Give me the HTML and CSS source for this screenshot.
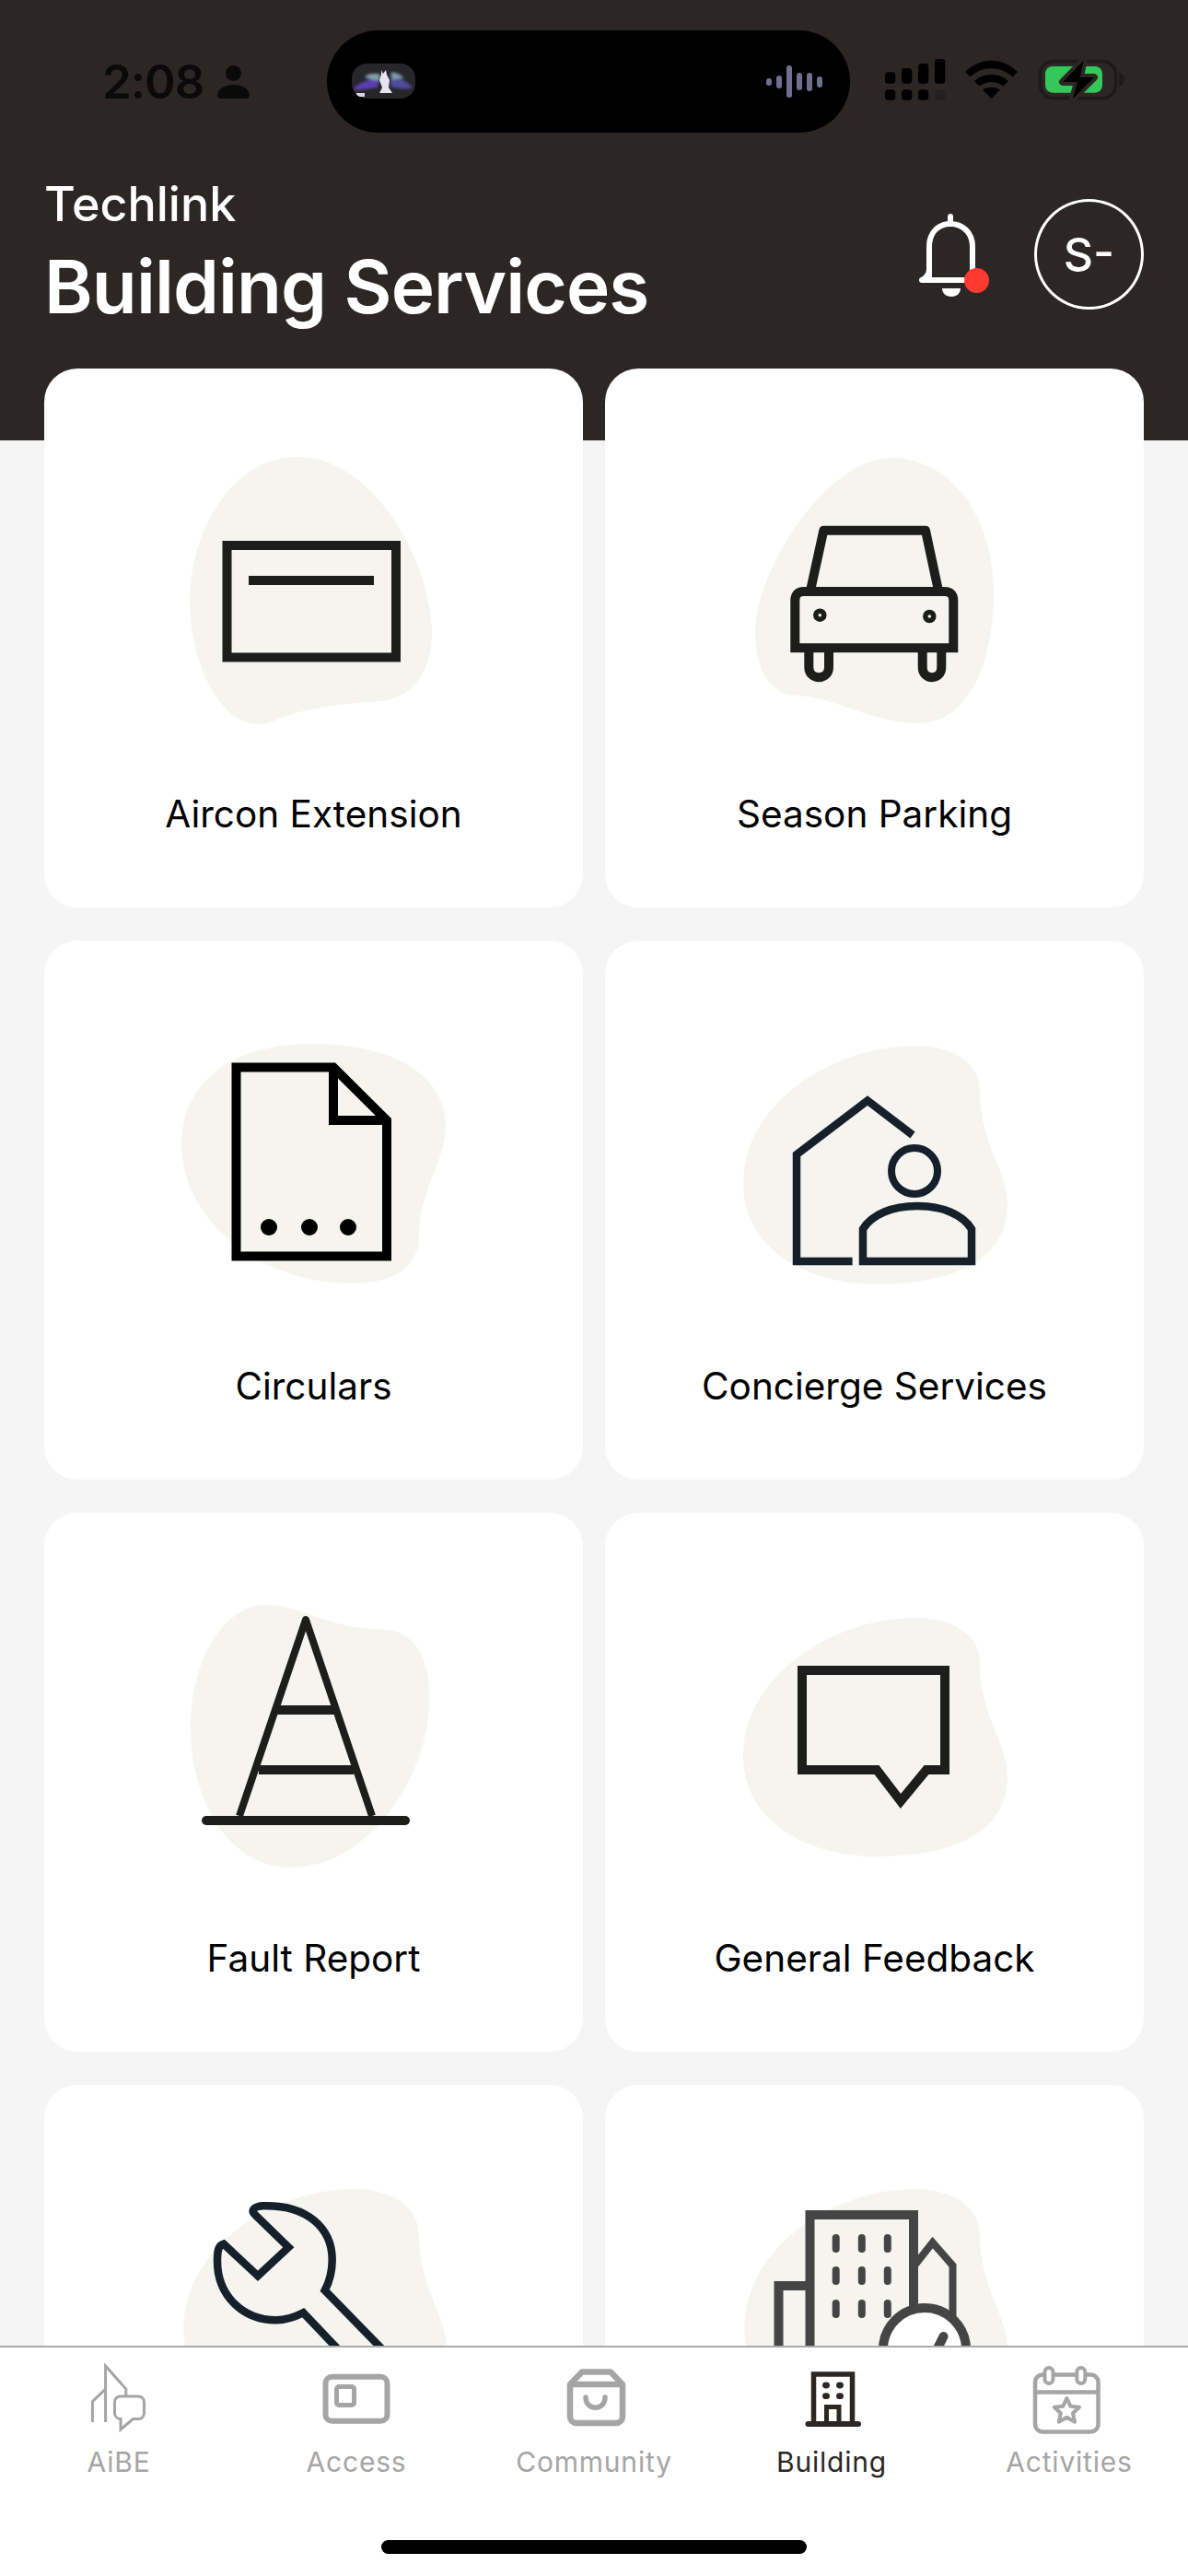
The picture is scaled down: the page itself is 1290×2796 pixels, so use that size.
FILE: index.html
```html
<!DOCTYPE html>
<html lang="en">
<head>
<meta charset="utf-8">
<title>Building Services</title>
<link rel="stylesheet" href="styles.css">
</head>
<body>
<div class="app">
  <header class="header">
    <div class="status">
      <div class="status-left">
        <span class="time">2:08</span>
        <svg class="person" viewBox="0 0 35 36"><circle cx="17.500" cy="8.500" r="8.500"/><path d="M0 32C1 25 8 21 17.500 21S34 25 35 32C35 34.800 33.500 36 31 36H4C1.500 36 0 34.800 0 32Z"/></svg>
      </div>
      <div class="island">
        <div class="thumb">
          <svg class="thumb-art" viewBox="0 0 69 38">
            <g class="thumb-blur">
              <path d="M1 28C8 20 18 17 30 16L28 26C18 27 8 30 1 28Z" fill="#5a3fb0"/>
              <path d="M14 14C20 10 26 10 31 12L30 19C24 18 18 18 14 14Z" fill="#7fa0a8"/>
              <path d="M66 26C60 19 52 15 42 14L42 25C50 27 58 29 66 26Z" fill="#4f4a9a"/>
              <path d="M42 10C48 9 54 12 56 16L44 18Z" fill="#7f9aa8"/>
            </g>
            <path d="M32 7L34 11L37 7L38 12L41 18L40 26L44 32H30L33 26L30 18L32 12Z" fill="#e8e4f2"/>
            <rect x="5" y="32" width="9" height="4" fill="#d8d8d8"/>
          </svg>
        </div>
        <div class="wave"><i class="b1"></i><i class="b2"></i><i class="b3"></i><i class="b4"></i><i class="b5"></i><i class="b6"></i></div>
      </div>
      <svg class="status-right" viewBox="961 33 262 111">
        <g fill="#000">
          <rect x="961" y="78.300" width="11.300" height="12.400" rx="3.500"/>
          <rect x="979" y="74" width="11.300" height="16.700" rx="3.500"/>
          <rect x="997" y="69" width="11.300" height="21.700" rx="3.500"/>
          <rect x="1015" y="64" width="11.300" height="26.700" rx="3.500"/>
          <rect x="961" y="97.300" width="11.300" height="11.400" rx="3.500"/>
          <rect x="979" y="97.300" width="11.300" height="11.400" rx="3.500"/>
          <rect x="997" y="97.300" width="11.300" height="11.400" rx="3.500"/>
          <rect x="1015" y="97.300" width="11.300" height="11.400" rx="3.500" fill="#24201e"/>
          <path d="M1048 78C1056 70 1066 65.700 1076.500 65.700S1097 70 1105 78L1099.500 83.500C1093 77.500 1085 74.300 1076.500 74.300S1060 77.500 1053.500 83.500Z"/>
          <path d="M1058 88C1063 83.500 1069.500 81 1076.500 81S1090 83.500 1095 88L1089.500 93.500C1085.500 90.500 1081 89 1076.500 89S1067.500 90.500 1063.500 93.500Z"/>
          <path d="M1067 97.500C1069.500 95.800 1073 94.800 1076.500 94.800S1083.500 95.800 1086 97.500L1076.500 107Z"/>
        </g>
        <rect x="1129.500" y="66.500" width="82" height="40" rx="14" fill="none" stroke="#1d1a18" stroke-width="3.500"/>
        <path d="M1215 79C1219 80 1221 83 1221 86.500S1219 93 1215 94Z" fill="#1d1a18"/>
        <rect x="1135" y="72" width="62" height="28.700" rx="8" fill="#34c759"/>
        <path d="M1176.700 65.700L1154 89H1170L1165 107L1188 84H1172.700Z" fill="#000" stroke="#2c2725" stroke-width="8" stroke-linejoin="round" paint-order="stroke"/>
      </svg>
    </div>
    <div class="titlebar">
      <div class="titles">
        <div class="subtitle">Techlink</div>
        <h1 class="title">Building Services</h1>
      </div>
      <div class="actions">
        <div class="bell">
          <svg viewBox="0 0 76 90" width="76" height="90">
            <path d="M34 3V10M11 68V36C11 20 21 11 34 11S58 20 58 36V60" fill="none" stroke="#fff" stroke-width="6" stroke-linecap="round"/>
            <path d="M3 72H56" fill="none" stroke="#fff" stroke-width="6" stroke-linecap="round"/>
            <path d="M3 72C7 70 11 66 11 60" fill="none" stroke="#fff" stroke-width="6"/>
            <path d="M25 81H45C45 86 41 90 35 90S25 86 25 81Z" fill="#fff"/>
          </svg>
          <span class="badge"></span>
        </div>
        <div class="avatar">S-</div>
      </div>
    </div>
  </header>

  <main class="content">
    <div class="grid">
      <a class="card">
        <svg class="art" viewBox="0 0 585 420">
          <path class="blob" d="M276 96C195 96 158 190 158 250C158 320 190 386 233 386C255 386 255 368 365 361C395 358 421 335 421 286C421 215 360 96 276 96Z"/>
          <g class="ink ink-dark">
            <rect x="198.500" y="192" width="183.500" height="121.500"/>
            <path d="M222 230H358"/>
          </g>
        </svg>
        <div class="label">Aircon Extension</div>
      </a>
      <a class="card">
        <svg class="art" viewBox="0 0 585 420">
          <path class="blob" d="M311 97C240 97 163 220 163 286C163 330 182 355 208 355C245 355 290 385 339 385C395 385 422 320 422 243C422 160 375 97 311 97Z"/>
          <g class="ink ink-dark">
            <path d="M223.700 238L237.300 175.700H348L361.300 238" stroke-linejoin="round"/>
            <path d="M206.300 303.300V252Q206.300 242 216 242H368.500Q378.300 242 378.300 252V303.300Z"/>
            <circle cx="233.300" cy="267.700" r="4.500" stroke-width="5.500"/>
            <circle cx="352.300" cy="269" r="4.500" stroke-width="5.500"/>
            <path d="M221.300 308V324C221.300 339 243 339 243 324V308M344.700 308V324C344.700 339 365.300 339 365.300 324V308"/>
          </g>
        </svg>
        <div class="label">Season Parking</div>
      </a>
      <a class="card">
        <svg class="art" viewBox="0 0 585 420">
          <path class="blob" d="M292 112C195 112 149 160 149 221C149 300 230 372 334 372C385 372 407 350 407 321C407 270 436 240 436 200C436 150 385 112 292 112Z"/>
          <g class="ink ink-black">
            <path d="M208.500 137.500H314L372 195V342.500H208.500Z"/>
            <path d="M314 137.500V195H372"/>
            <circle class="solid" cx="244" cy="311" r="9"/>
            <circle class="solid" cx="288" cy="311" r="9"/>
            <circle class="solid" cx="330" cy="311" r="9"/>
          </g>
        </svg>
        <div class="label">Circulars</div>
      </a>
      <a class="card">
        <svg class="art" viewBox="0 0 585 420">
          <path class="blob" d="M336 114C250 114 150 175 150 264C150 335 220 373 294 373C390 373 437 340 437 286C437 250 407 220 407 164C407 130 375 114 336 114Z"/>
          <g class="ink ink-navy">
            <path d="M268.600 348H208V232L285 173.500L334 211" stroke-width="8.500"/>
            <circle cx="336" cy="250" r="25" stroke-width="8"/>
            <path d="M280 348V313C290 297 312 288 339 288S388 297 398 313V348Z" stroke-width="8.500"/>
          </g>
        </svg>
        <div class="label">Concierge Services</div>
      </a>
      <a class="card">
        <svg class="art" viewBox="0 0 585 420">
          <path class="blob" d="M241 100C195 100 159 160 159 231C159 320 205 385 268 385C350 385 418.500 290 418.500 199C418.500 155 400 126.500 365.500 126.500C310 126.500 280 100 241 100Z"/>
          <g class="ink ink-dark">
            <path d="M212 329L284 116L356 329" stroke-width="8" stroke-linejoin="round"/>
            <path d="M253 214H316M233 279H336"/>
            <path d="M176 334H392" stroke-linecap="round"/>
          </g>
        </svg>
        <div class="label">Fault Report</div>
      </a>
      <a class="card">
        <svg class="art" viewBox="0 0 585 420">
          <path class="blob" d="M336 114C250 114 150 175 150 264C150 335 220 373 294 373C390 373 437 340 437 286C437 250 407 220 407 164C407 130 375 114 336 114Z"/>
          <path class="ink ink-dark" d="M214 171H369V279H349L321 313L295 279H214Z"/>
        </svg>
        <div class="label">General Feedback</div>
      </a>
      <a class="card">
        <svg class="art" viewBox="0 0 585 420">
          <path class="blob" d="M336 113C250 113 151.500 175 151.500 264.700C151.500 335 220 373 294 373C390 373 437 340 437 286C437 250 407 220 407 164C407 130 375 113 336 113Z"/>
          <path class="ink ink-navy ink-wrench" d="M375 295L304.700 223C310 213 312.700 203 312.700 190C312.700 155 285 130 238 131.300C229 131.500 223 136 229 141L265.300 176.300L232 207.300L194.700 172.500C189 174 188 180 188 191.300C188 228 215 255.300 252 255.300C262 255.300 270 253 281.300 247.300L322 290"/>
        </svg>
      </a>
      <a class="card">
        <svg class="art" viewBox="0 0 585 420">
          <path class="blob" d="M336 113C250 113 151.500 175 151.500 264.700C151.500 335 220 373 294 373C390 373 437 340 437 286C437 250 407 220 407 164C407 130 375 113 336 113Z"/>
          <g class="ink ink-gray">
            <path d="M222.500 300V141H335V250"/>
            <path d="M188.500 300V218H222"/>
            <path d="M336 196L355.700 171L377.500 196V255" stroke-width="8"/>
            <path d="M250.700 166V178M278.800 166V178M306.800 166V178M250.700 201V213M278.800 201V213M306.800 201V213M250.700 237V249M278.800 237V249M306.800 237V249" stroke-width="8" stroke-linecap="round"/>
            <circle class="white" cx="347" cy="287" r="45"/>
            <path d="M367.500 273L358 292" stroke-linecap="round"/>
          </g>
        </svg>
      </a>
    </div>
  </main>

  <nav class="tabbar">
    <div class="tabs">
      <a class="tab">
        <svg viewBox="0 0 100 80" class="tab-icon stroke-gray">
          <path d="M35.600 64V3L57.800 28V36M21.400 64V41.700L35.600 28" stroke-width="3"/>
          <path d="M51.500 36H71.500A6 6 0 0 1 77.500 42V54.500A6 6 0 0 1 71.500 60.500H65.500L52 72V60.500A6.500 6.500 0 0 1 45.500 54.500V42A6 6 0 0 1 51.500 36Z" stroke-width="3"/>
        </svg>
        <span class="tab-label">AiBE</span>
      </a>
      <a class="tab">
        <svg viewBox="0 0 100 80" class="tab-icon stroke-gray">
          <rect x="16.500" y="14.700" width="67" height="48" rx="7" stroke-width="6"/>
          <rect x="28.500" y="25.500" width="19" height="20" rx="2.500" stroke-width="5"/>
        </svg>
        <span class="tab-label">Access</span>
      </a>
      <a class="tab">
        <svg viewBox="0 0 100 80" class="tab-icon stroke-gray">
          <path d="M24 23L37 9.500H68L81 23V58A7 7 0 0 1 74 65H31A7 7 0 0 1 24 58Z" stroke-width="6.500" stroke-linejoin="round"/>
          <path d="M24 23H81" stroke-width="6.500"/>
          <path d="M41 37C41 52 62 52 62 37" stroke-width="5.500" stroke-linecap="round"/>
        </svg>
        <span class="tab-label">Community</span>
      </a>
      <a class="tab active">
        <svg viewBox="0 0 100 80" class="tab-icon stroke-active">
          <path d="M30.500 65V12H72.500V65" stroke-width="5.500"/>
          <path d="M24.500 66H79" stroke-width="6" stroke-linecap="round"/>
          <path d="M44.500 65V47.500H58V65" stroke-width="5"/>
          <g class="tab-dots">
            <ellipse cx="44" cy="24" rx="4" ry="3.400"/><ellipse cx="59" cy="24" rx="4" ry="3.400"/>
            <ellipse cx="44" cy="35.700" rx="4" ry="3.400"/><ellipse cx="59" cy="35.700" rx="4" ry="3.400"/>
          </g>
        </svg>
        <span class="tab-label">Building</span>
      </a>
      <a class="tab">
        <svg viewBox="0 0 100 80" class="tab-icon stroke-gray">
          <rect x="13" y="12.500" width="68.500" height="62" rx="8" stroke-width="4.500"/>
          <path d="M13 31.500H81.500" stroke-width="4.500"/>
          <rect class="tab-fill" x="23.500" y="5" width="9" height="17" rx="4.500" stroke-width="4"/>
          <rect class="tab-fill" x="58.300" y="5" width="9" height="17" rx="4.500" stroke-width="4"/>
          <path d="M47.400 38L51.500 46.800L61 47.800L54 54.200L56 63.700L47.400 58.800L38.800 63.700L40.800 54.200L33.800 47.800L43.300 46.800Z" stroke-width="4" stroke-linejoin="round"/>
        </svg>
        <span class="tab-label">Activities</span>
      </a>
    </div>
    <div class="home-bar"></div>
  </nav>
</div>
</body>
</html>
```

FILE: styles.css
```css
* { box-sizing: border-box; }
html, body { margin: 0; padding: 0; }
body { width: 1290px; height: 2796px; overflow: hidden; background: #f5f5f5; font-family: Inter, "Noto Sans", sans-serif; }

.app { width: 1290px; height: 2796px; display: flex; flex-direction: column; overflow: hidden; }

/* Header */
.header { flex: none; height: 478px; background: #2c2725; padding-top: 33px; }
.status { display: flex; align-items: center; height: 111px; padding-left: 111px; }
.status-left { width: 244px; display: flex; align-items: center; gap: 15px; }
.time { font-size: 51px; font-weight: 600; line-height: 60px; letter-spacing: -1px; color: #0b0a0a; }
.person { width: 35px; height: 36px; fill: #0b0a0a; margin-top: 1px; }
.island { width: 568px; height: 111px; background: #000; border-radius: 56px; display: flex; align-items: center; justify-content: space-between; padding: 0 30px 0 27px; }
.thumb { width: 69px; height: 38px; border-radius: 16px; background: #27262b; overflow: hidden; margin-top: -1px; }
.thumb-art { display: block; width: 69px; height: 38px; }
.thumb-blur { filter: blur(1.5px); }
.wave { display: flex; align-items: center; gap: 5px; }
.wave i { width: 6px; border-radius: 3px; background: #6f7090; }
.wave .b1 { height: 8px; }
.wave .b2 { height: 14px; }
.wave .b3 { height: 35px; }
.wave .b4 { height: 19px; }
.wave .b5 { height: 20px; }
.wave .b6 { height: 12px; }
.status-right { width: 262px; height: 111px; margin-left: 38px; flex: none; }

.titlebar { display: flex; justify-content: space-between; align-items: flex-start; padding: 48px 48px 0; }
.titles { color: #fff; }
.subtitle { font-size: 52px; font-weight: 500; line-height: 60px; }
.title { margin: 14px 0 0; font-size: 80px; font-weight: 600; line-height: 90px; letter-spacing: -0.9px; }
.actions { display: flex; align-items: center; gap: 49px; margin-top: 24px; }
.bell { position: relative; width: 76px; height: 90px; margin-top: 2px; }
.bell svg { display: block; }
.badge { position: absolute; left: 49px; top: 59px; width: 27px; height: 27px; border-radius: 50%; background: #ff3b30; }
.avatar { width: 119px; height: 120px; border-radius: 50%; border: 3px solid #fff; color: #fff; display: flex; align-items: center; justify-content: center; font-size: 50px; font-weight: 500; }

/* Cards */
.content { flex: 1; min-height: 0; overflow: hidden; margin-top: -78px; position: relative; padding: 0 48px; }
.grid { display: grid; grid-template-columns: 585px 585px; column-gap: 24px; row-gap: 36px; }
.card { display: block; height: 585px; background: #fff; border-radius: 36px; text-align: center; color: #000; }
.art { display: block; width: 585px; height: 420px; }
.label { margin-top: 39px; font-size: 40.500px; line-height: 50px; font-weight: 400; }
.blob { fill: #f5f4ef; }
.ink { fill: none; stroke-width: 10; }
.ink-dark { stroke: #1d1d1b; }
.ink-black { stroke: #000; }
.ink-navy { stroke: #16202a; }
.ink-gray { stroke: #454545; }
.ink-wrench { stroke-width: 8.500; stroke-linejoin: miter; }
.solid { fill: #000; stroke: none; }
.white { fill: #fff; }

/* Tab bar */
.tabbar { flex: none; height: 250px; background: #fff; border-top: 2px solid #aaa; position: relative; }
.tabs { display: grid; grid-template-columns: repeat(5, 258px); padding-top: 17px; }
.tab { display: flex; flex-direction: column; align-items: center; color: #a5a5a5; }
.tab.active { color: #2c2725; }
.tab-icon { display: block; width: 100px; height: 80px; fill: none; }
.stroke-gray { stroke: #a5a5a5; }
.stroke-active { stroke: #2c2725; }
.tab-dots { fill: #2c2725; stroke: none; }
.tab-fill { fill: #fff; }
.tab-label { margin-top: 9px; font-size: 30px; line-height: 36px; letter-spacing: 0.8px; font-weight: 400; }
.home-bar { position: absolute; left: 414px; top: 209px; width: 462px; height: 15px; border-radius: 8px; background: #000; }
```
